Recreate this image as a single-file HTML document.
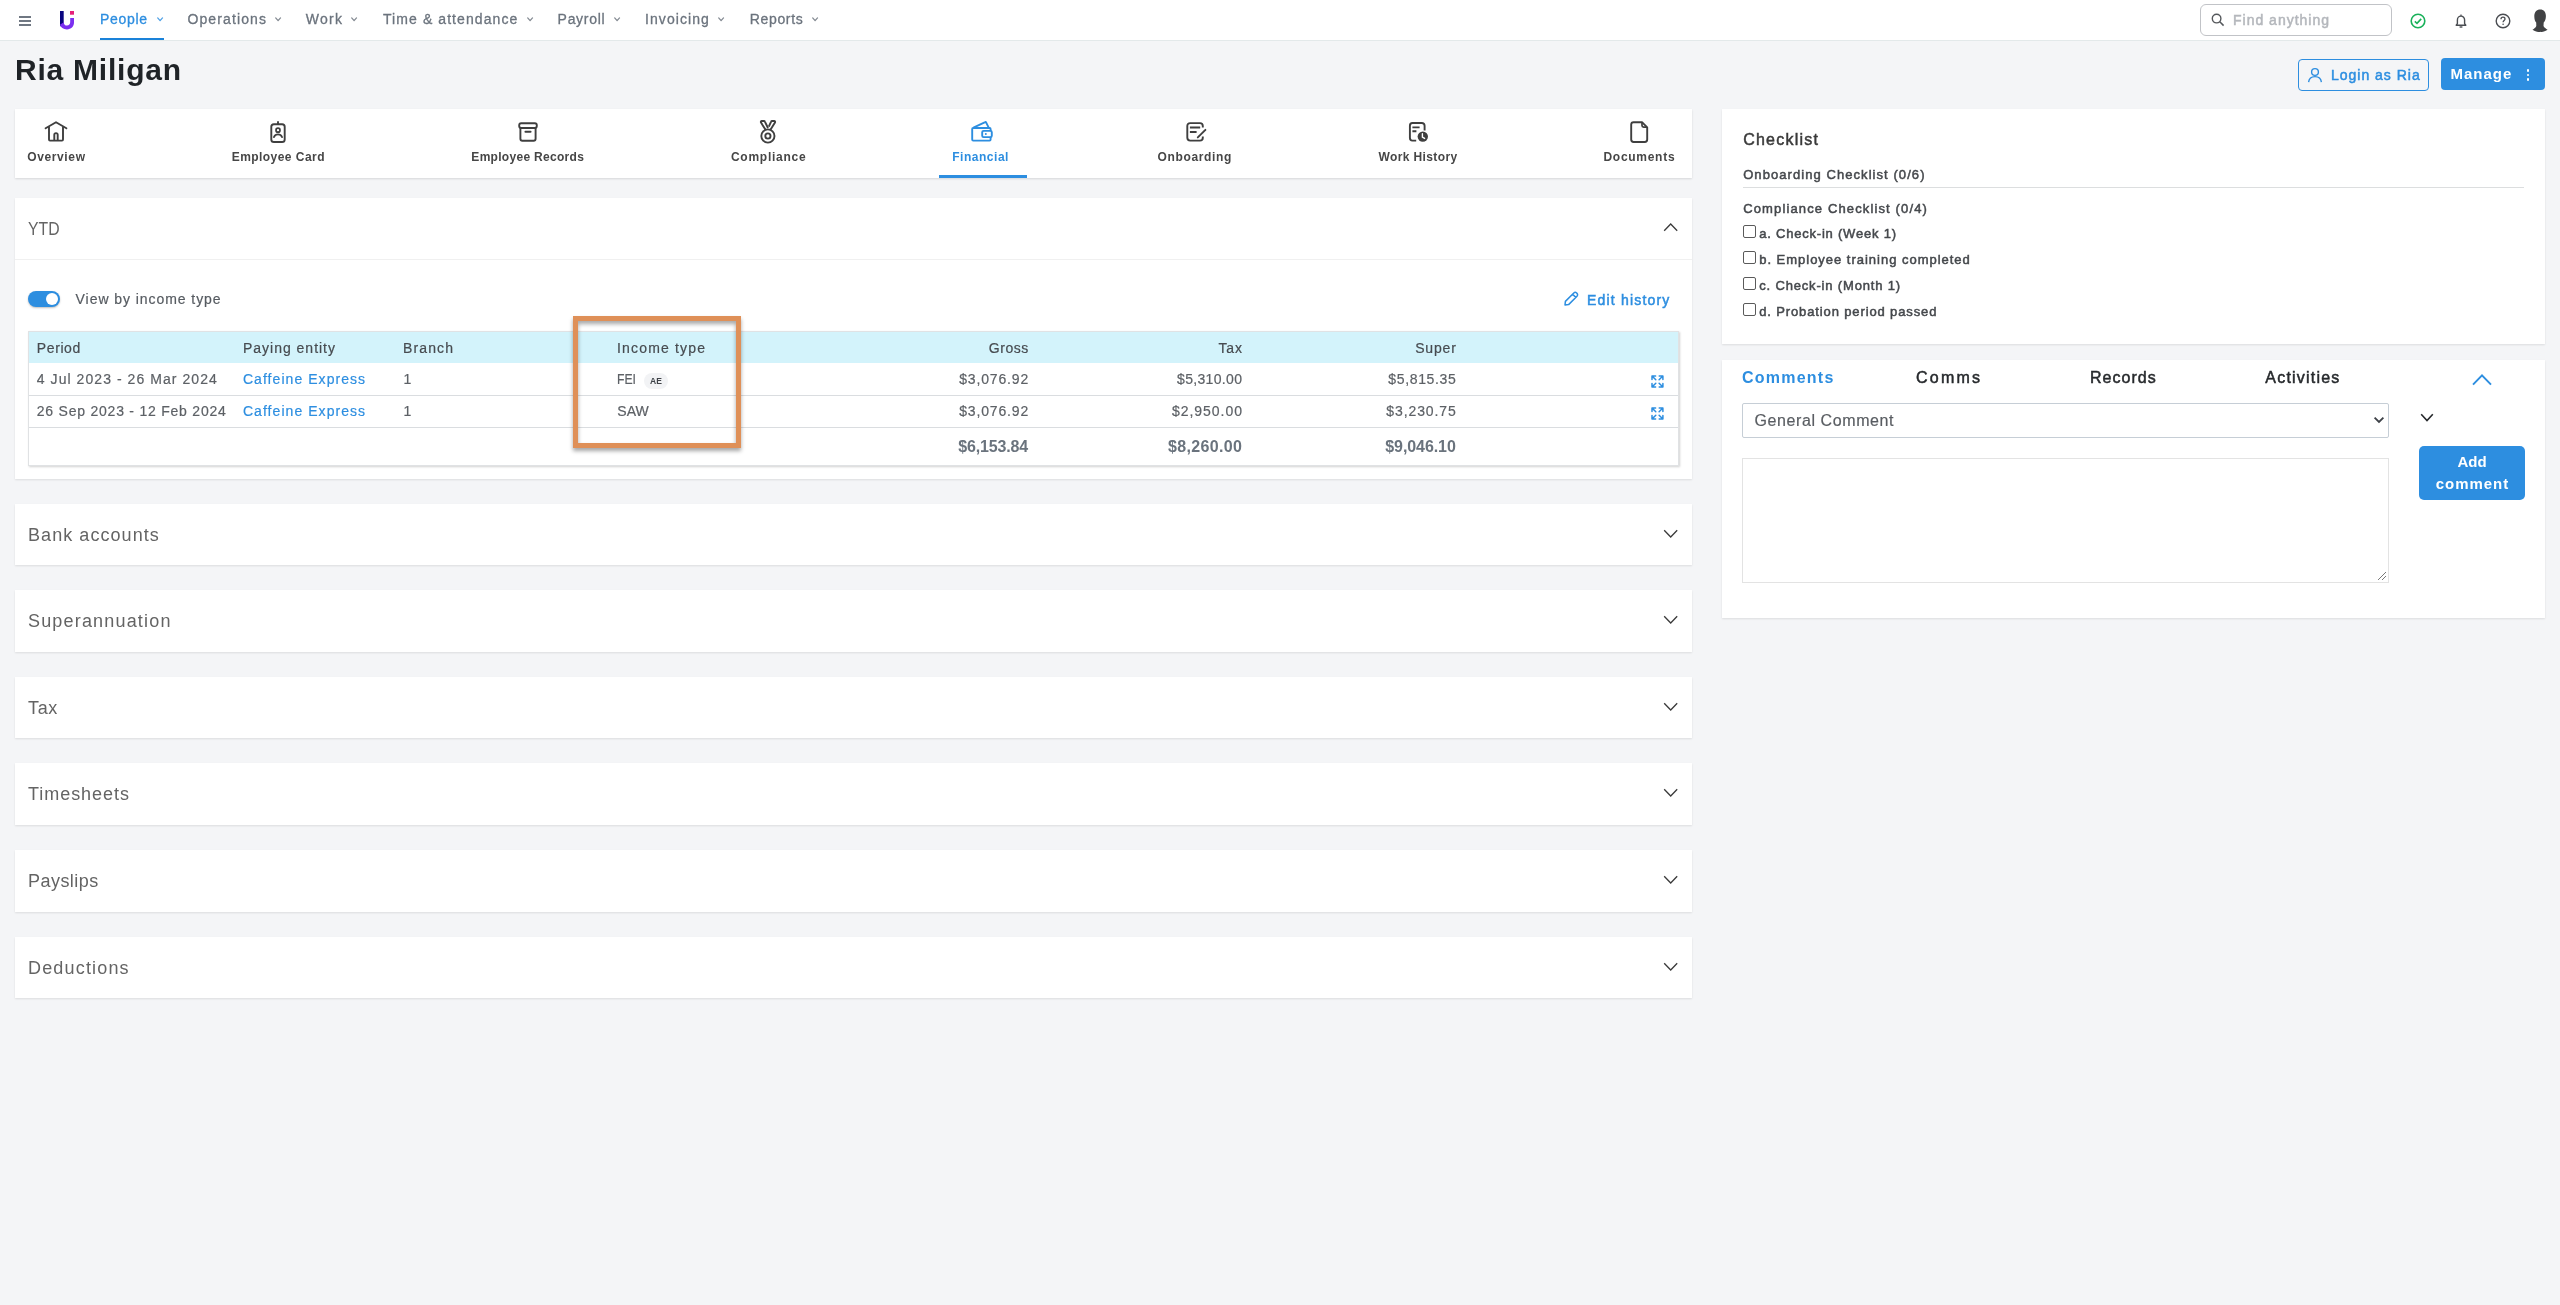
<!DOCTYPE html><html><head><meta charset="utf-8"><style>html,body{margin:0;padding:0;width:2560px;height:1305px;overflow:hidden;background:#f4f5f7;font-family:"Liberation Sans",sans-serif}.t{position:absolute;white-space:nowrap;line-height:1;-webkit-font-smoothing:antialiased}</style></head><body>
<div style="position:absolute;left:0;top:0;width:2560px;height:40px;background:#fff;border-bottom:1px solid #e3e9ea"></div>
<div style="position:absolute;left:19px;top:16.2px;width:12px;height:1.7px;background:#6f7782"></div>
<div style="position:absolute;left:19px;top:20.2px;width:12px;height:1.7px;background:#6f7782"></div>
<div style="position:absolute;left:19px;top:24.2px;width:12px;height:1.7px;background:#6f7782"></div>
<svg style="position:absolute;left:58px;top:9px" width="20" height="22" viewBox="0 0 20 22">
<rect x="12" y="2" width="4" height="3.7" fill="#e6207a"/>
<path d="M2 2 H5.7 V15 L2 17.5 Z" fill="#0a0580"/>
<path d="M2 14 V13.5 M2.2 16 C2.6 18.6 4.6 20.2 7.2 20.2 C10.2 20.2 12.3 18.2 12.3 15 V9 H16 V15 C16 19.7 12.4 23 9 23 " fill="none"/>
<path d="M2 15.8 L5.7 13.2 C5.9 15.4 7 16.6 9 16.6 C11 16.6 12.2 15.2 12.2 13 V9.1 H16 V13.6 C16 17.6 13 20.4 9 20.4 C5.3 20.4 2.6 18.3 2 15.8 Z" fill="#7b2ff0"/>
</svg>
<svg style="position:absolute;left:157.0px;top:17.4px" width="7" height="5" viewBox="0 0 7 5"><path d="M0.7 0.9 L3.1 3.7 L5.5 0.9" fill="none" stroke="#2d8ee0" stroke-width="1.2" stroke-linecap="round" stroke-linejoin="round" opacity="0.85"/></svg>
<svg style="position:absolute;left:274.8px;top:17.4px" width="7" height="5" viewBox="0 0 7 5"><path d="M0.7 0.9 L3.1 3.7 L5.5 0.9" fill="none" stroke="#6b737d" stroke-width="1.2" stroke-linecap="round" stroke-linejoin="round" opacity="0.85"/></svg>
<svg style="position:absolute;left:351.0px;top:17.4px" width="7" height="5" viewBox="0 0 7 5"><path d="M0.7 0.9 L3.1 3.7 L5.5 0.9" fill="none" stroke="#6b737d" stroke-width="1.2" stroke-linecap="round" stroke-linejoin="round" opacity="0.85"/></svg>
<svg style="position:absolute;left:526.7px;top:17.4px" width="7" height="5" viewBox="0 0 7 5"><path d="M0.7 0.9 L3.1 3.7 L5.5 0.9" fill="none" stroke="#6b737d" stroke-width="1.2" stroke-linecap="round" stroke-linejoin="round" opacity="0.85"/></svg>
<svg style="position:absolute;left:614.0px;top:17.4px" width="7" height="5" viewBox="0 0 7 5"><path d="M0.7 0.9 L3.1 3.7 L5.5 0.9" fill="none" stroke="#6b737d" stroke-width="1.2" stroke-linecap="round" stroke-linejoin="round" opacity="0.85"/></svg>
<svg style="position:absolute;left:718.0px;top:17.4px" width="7" height="5" viewBox="0 0 7 5"><path d="M0.7 0.9 L3.1 3.7 L5.5 0.9" fill="none" stroke="#6b737d" stroke-width="1.2" stroke-linecap="round" stroke-linejoin="round" opacity="0.85"/></svg>
<svg style="position:absolute;left:812.0px;top:17.4px" width="7" height="5" viewBox="0 0 7 5"><path d="M0.7 0.9 L3.1 3.7 L5.5 0.9" fill="none" stroke="#6b737d" stroke-width="1.2" stroke-linecap="round" stroke-linejoin="round" opacity="0.85"/></svg>
<div style="position:absolute;left:100px;top:38px;width:64px;height:2px;background:#1a82d9"></div>
<div style="position:absolute;left:2200px;top:4px;width:190px;height:30px;border:1px solid #c1c3c7;border-radius:6px;background:#fff"></div>
<svg style="position:absolute;left:2211px;top:13px" width="14" height="14" viewBox="0 0 14 14"><circle cx="5.6" cy="5.6" r="4.3" fill="none" stroke="#55585c" stroke-width="1.4"/><path d="M8.8 8.8 L12.6 12.6" stroke="#55585c" stroke-width="1.5"/></svg>
<svg style="position:absolute;left:2409px;top:12px" width="18" height="18" viewBox="0 0 18 18"><circle cx="9" cy="9" r="6.8" fill="none" stroke="#19b15a" stroke-width="1.6"/><path d="M5.8 9.3 L8 11.3 L12.2 6.9" fill="none" stroke="#19b15a" stroke-width="1.6"/></svg>
<svg style="position:absolute;left:2452px;top:12px" width="18" height="18" viewBox="0 0 18 18"><path d="M4.2 13.2 H13.8 L12.6 11.6 V8 C12.6 5.8 11 4.1 9 4.1 C7 4.1 5.4 5.8 5.4 8 V11.6 Z" fill="none" stroke="#4a4d52" stroke-width="1.4" stroke-linejoin="round"/><path d="M7.6 15 H10.4" stroke="#4a4d52" stroke-width="1.4"/><path d="M9 2.4 V4" stroke="#4a4d52" stroke-width="1.2"/></svg>
<svg style="position:absolute;left:2494px;top:12px" width="18" height="18" viewBox="0 0 18 18"><circle cx="9" cy="9" r="6.8" fill="none" stroke="#4a4d52" stroke-width="1.4"/><path d="M7 7.2 C7 5.9 7.9 5.2 9 5.2 C10.1 5.2 11 5.9 11 7 C11 8.4 9.1 8.6 9.1 10.2" fill="none" stroke="#4a4d52" stroke-width="1.3"/><circle cx="9.1" cy="12.3" r="0.8" fill="#4a4d52"/></svg>
<svg style="position:absolute;left:2524px;top:4px" width="32" height="32" viewBox="0 0 32 32"><path d="M16.2 5.4 C19.8 5.4 21.9 8 21.9 12 C21.9 15.4 20.9 17.4 19.7 18.4 L19.5 22 C20.3 23.6 21.9 24.8 23.6 25.7 C21.2 27.3 18.6 28 16 28 C13.4 28 10.8 27.3 8.5 25.7 C10.2 24.8 11.6 23.6 12.3 22 L12.2 18.4 C11 17.4 10.3 15.4 10.3 12 C10.3 8 12.6 5.4 16.2 5.4 Z" fill="#414244"/></svg>
<div style="position:absolute;left:2298px;top:59px;width:129px;height:30px;border:1px solid #2d8ee0;border-radius:4px"></div>
<svg style="position:absolute;left:2307px;top:67px" width="16" height="16" viewBox="0 0 16 16"><circle cx="8" cy="5" r="3.4" fill="none" stroke="#2d8ee0" stroke-width="1.4"/><path d="M1.6 15.2 C2 11.6 4.6 9.6 8 9.6 C11.4 9.6 14 11.6 14.4 15.2" fill="none" stroke="#2d8ee0" stroke-width="1.4"/></svg>
<div style="position:absolute;left:2441px;top:58px;width:104px;height:32px;background:#2d8ee0;border-radius:4px"></div>
<div style="position:absolute;left:2526.8px;top:69.2px;width:2.4px;height:2.4px;border-radius:50%;background:#fff"></div>
<div style="position:absolute;left:2526.8px;top:73.8px;width:2.4px;height:2.4px;border-radius:50%;background:#fff"></div>
<div style="position:absolute;left:2526.8px;top:78.4px;width:2.4px;height:2.4px;border-radius:50%;background:#fff"></div>
<div style="position:absolute;left:15px;top:109px;width:1677px;height:69px;background:#fff;box-shadow:0 1px 2px rgba(0,0,0,.12)"></div>
<div style="position:absolute;left:939px;top:175px;width:88px;height:3px;background:#2d8ee0"></div>
<svg style="position:absolute;left:44px;top:121px" width="24" height="22" viewBox="0 0 24 22"><path d="M1.6 7.2 L12 1.2 L22.4 7.2" fill="none" stroke="#3f3f3f" stroke-width="1.9" stroke-linecap="round" stroke-linejoin="round"/><path d="M5 5.6 V18.6 C5 19.2 5.4 19.6 6 19.6 H18 C18.6 19.6 19 19.2 19 18.6 V5.6" fill="none" stroke="#3f3f3f" stroke-width="1.9" stroke-linejoin="round"/><path d="M10.3 19.6 V13.8 C10.3 12.8 11 12.1 12 12.1 C13 12.1 13.7 12.8 13.7 13.8 V19.6" fill="none" stroke="#3f3f3f" stroke-width="1.9"/></svg>
<svg style="position:absolute;left:269px;top:120px" width="18" height="24" viewBox="0 0 18 24"><rect x="2.3" y="4.2" width="13.4" height="17.8" rx="2.6" fill="none" stroke="#3f3f3f" stroke-width="1.9"/><path d="M9 1.2 V4.2" stroke="#3f3f3f" stroke-width="1.9"/><circle cx="9" cy="10.2" r="2" fill="none" stroke="#3f3f3f" stroke-width="1.7"/><path d="M4.9 17.2 C5.7 15.3 7.1 14.4 9 14.4 C10.9 14.4 12.3 15.3 13.1 17.2" fill="none" stroke="#3f3f3f" stroke-width="1.7" stroke-linecap="round"/></svg>
<svg style="position:absolute;left:517px;top:121px" width="22" height="22" viewBox="0 0 22 22"><rect x="2.2" y="2.2" width="17.6" height="4.8" rx="2" fill="none" stroke="#3f3f3f" stroke-width="1.9"/><path d="M3.4 7 V17.8 C3.4 19 4.2 19.8 5.4 19.8 H16.6 C17.8 19.8 18.6 19 18.6 17.8 V7" fill="none" stroke="#3f3f3f" stroke-width="1.9"/><path d="M8.4 10.8 H13.6" stroke="#3f3f3f" stroke-width="1.9" stroke-linecap="round"/></svg>
<svg style="position:absolute;left:758px;top:119px" width="20" height="26" viewBox="0 0 20 26"><path d="M7.4 10.6 L3 3.6 C2.6 2.8 3 2 3.8 2 H5.8 C6.4 2 6.8 2.3 7 2.8 L10 9" fill="none" stroke="#3f3f3f" stroke-width="1.9" stroke-linejoin="round"/><path d="M12.6 10.6 L17 3.6 C17.4 2.8 17 2 16.2 2 H14.2 C13.6 2 13.2 2.3 13 2.8 L10.8 7.6" fill="none" stroke="#3f3f3f" stroke-width="1.9" stroke-linejoin="round"/><circle cx="9.9" cy="17" r="6.6" fill="#fff" stroke="#3f3f3f" stroke-width="1.9"/><circle cx="9.9" cy="17" r="2.6" fill="none" stroke="#3f3f3f" stroke-width="1.9"/></svg>
<svg style="position:absolute;left:970px;top:120px" width="24" height="23" viewBox="0 0 24 23"><path d="M3.4 7.6 L15.2 2.2 C15.6 2 16 2.2 16.2 2.6 L18.6 7.4" fill="none" stroke="#2d8ee0" stroke-width="1.9" stroke-linejoin="round"/><rect x="2.2" y="8" width="18.4" height="12.6" rx="1" fill="none" stroke="#2d8ee0" stroke-width="1.9"/><rect x="12.2" y="10.9" width="9.6" height="6.2" rx="1.4" fill="#fff" stroke="#2d8ee0" stroke-width="1.9"/><circle cx="15.8" cy="14" r="1" fill="#2d8ee0"/></svg>
<svg style="position:absolute;left:1185px;top:121px" width="22" height="22" viewBox="0 0 22 22"><path d="M17.8 6.6 V5.1 C17.8 3.4 16.9 2.1 15 2.1 H5.2 C3.4 2.1 2.3 3.2 2.3 5.1 V16.6 C2.3 18.5 3.4 19.6 5.2 19.6 H15 C16.8 19.6 17.8 18.6 17.8 16.8 V15.6" fill="none" stroke="#3f3f3f" stroke-width="1.9"/><path d="M4.9 6.5 H15.2 M4.9 11 H11.6" stroke="#3f3f3f" stroke-width="1.9"/><path d="M12.8 16.4 L20.4 8.8" stroke="#3f3f3f" stroke-width="1.9" stroke-linecap="round"/></svg>
<svg style="position:absolute;left:1408px;top:121px" width="22" height="23" viewBox="0 0 22 23"><path d="M16.6 9.4 V4.8 C16.6 3 15.6 2 13.8 2 H4.4 C2.8 2 1.9 3 1.9 4.8 V16.8 C1.9 18.6 2.8 19.6 4.4 19.6 H8.2" fill="none" stroke="#3f3f3f" stroke-width="1.9"/><path d="M4.4 6.4 H11.6 M4.4 10.2 H8.4" stroke="#3f3f3f" stroke-width="1.9"/><circle cx="14.8" cy="15.6" r="5.2" fill="#3f3f3f"/><path d="M14.4 12.8 V16 L16.6 17.4" fill="none" stroke="#fff" stroke-width="1.4" stroke-linecap="round"/></svg>
<svg style="position:absolute;left:1629px;top:120px" width="20" height="24" viewBox="0 0 20 24"><path d="M13 2.2 H4.6 C3 2.2 2.2 3 2.2 4.6 V19.6 C2.2 21.2 3 22 4.6 22 H15.8 C17.4 22 18.2 21.2 18.2 19.6 V7.4 Z" fill="none" stroke="#3f3f3f" stroke-width="1.9" stroke-linejoin="round"/><path d="M13 2.4 V5.6 C13 6.6 13.6 7.2 14.6 7.2 H18" fill="none" stroke="#3f3f3f" stroke-width="1.7"/></svg>
<div style="position:absolute;left:15px;top:198px;width:1677px;height:281px;background:#fff;box-shadow:0 1px 2px rgba(0,0,0,.1)"></div>
<svg style="position:absolute;left:1663px;top:221px" width="16" height="12" viewBox="0 0 16 12"><path d="M1.2 9.8 L7.7 3 L14.2 9.8" fill="none" stroke="#3a3a3a" stroke-width="1.3"/></svg>
<div style="position:absolute;left:15px;top:259px;width:1677px;height:1px;background:#f0f0f0"></div>
<div style="position:absolute;left:28px;top:291px;width:32px;height:16px;border-radius:8px;background:#2d8ee0;box-shadow:0 1px 2px rgba(0,0,0,.25)"></div>
<div style="position:absolute;left:46px;top:293px;width:12px;height:12px;border-radius:50%;background:#fff"></div>
<svg style="position:absolute;left:1562px;top:290px" width="18" height="18" viewBox="0 0 18 18"><path d="M3 15 L3.4 11.4 L11.8 3 C12.6 2.2 13.8 2.2 14.6 3 L15 3.4 C15.8 4.2 15.8 5.4 15 6.2 L6.6 14.6 Z M10.6 4.2 L13.8 7.4" fill="none" stroke="#2d8ee0" stroke-width="1.5" stroke-linejoin="round"/></svg>
<div style="position:absolute;left:28px;top:331px;width:1649px;height:133px;border:1px solid #e0e2e4;background:#fff;box-shadow:1px 1px 2px rgba(0,0,0,.18)"></div>
<div style="position:absolute;left:29px;top:332px;width:1649px;height:31px;background:#d3f3fb"></div>
<div style="position:absolute;left:29px;top:395px;width:1649px;height:1px;background:#dadde0"></div>
<div style="position:absolute;left:29px;top:427px;width:1649px;height:1px;background:#dadde0"></div>
<div style="position:absolute;left:644px;top:373px;width:24px;height:16px;border-radius:8px;background:#f2f3f5"></div>
<svg style="position:absolute;left:1650px;top:374px" width="15" height="15" viewBox="0 0 15 15"><g fill="none" stroke="#2d8ee0" stroke-width="1.5" stroke-linecap="round" stroke-linejoin="round"><path d="M2 5.6 V2 H5.6 M2 2 L5.8 5.8"/><path d="M9.2 2 H12.9 V5.6 M12.9 2 L9.1 5.8"/><path d="M2 9.4 V13 H5.6 M2 13 L5.8 9.2"/><path d="M12.9 9.4 V13 H9.2 M12.9 13 L9.1 9.2"/></g></svg>
<svg style="position:absolute;left:1650px;top:406px" width="15" height="15" viewBox="0 0 15 15"><g fill="none" stroke="#2d8ee0" stroke-width="1.5" stroke-linecap="round" stroke-linejoin="round"><path d="M2 5.6 V2 H5.6 M2 2 L5.8 5.8"/><path d="M9.2 2 H12.9 V5.6 M12.9 2 L9.1 5.8"/><path d="M2 9.4 V13 H5.6 M2 13 L5.8 9.2"/><path d="M12.9 9.4 V13 H9.2 M12.9 13 L9.1 9.2"/></g></svg>
<div style="position:absolute;left:15px;top:504px;width:1677px;height:61px;background:#fff;box-shadow:0 1px 2px rgba(0,0,0,.1)"></div>
<svg style="position:absolute;left:1663px;top:528px" width="16" height="12" viewBox="0 0 16 12"><path d="M1.2 2.2 L7.7 9 L14.2 2.2" fill="none" stroke="#3a3a3a" stroke-width="1.3"/></svg>
<div style="position:absolute;left:15px;top:590px;width:1677px;height:62px;background:#fff;box-shadow:0 1px 2px rgba(0,0,0,.1)"></div>
<svg style="position:absolute;left:1663px;top:614px" width="16" height="12" viewBox="0 0 16 12"><path d="M1.2 2.2 L7.7 9 L14.2 2.2" fill="none" stroke="#3a3a3a" stroke-width="1.3"/></svg>
<div style="position:absolute;left:15px;top:677px;width:1677px;height:61px;background:#fff;box-shadow:0 1px 2px rgba(0,0,0,.1)"></div>
<svg style="position:absolute;left:1663px;top:701px" width="16" height="12" viewBox="0 0 16 12"><path d="M1.2 2.2 L7.7 9 L14.2 2.2" fill="none" stroke="#3a3a3a" stroke-width="1.3"/></svg>
<div style="position:absolute;left:15px;top:763px;width:1677px;height:62px;background:#fff;box-shadow:0 1px 2px rgba(0,0,0,.1)"></div>
<svg style="position:absolute;left:1663px;top:787px" width="16" height="12" viewBox="0 0 16 12"><path d="M1.2 2.2 L7.7 9 L14.2 2.2" fill="none" stroke="#3a3a3a" stroke-width="1.3"/></svg>
<div style="position:absolute;left:15px;top:850px;width:1677px;height:62px;background:#fff;box-shadow:0 1px 2px rgba(0,0,0,.1)"></div>
<svg style="position:absolute;left:1663px;top:874px" width="16" height="12" viewBox="0 0 16 12"><path d="M1.2 2.2 L7.7 9 L14.2 2.2" fill="none" stroke="#3a3a3a" stroke-width="1.3"/></svg>
<div style="position:absolute;left:15px;top:937px;width:1677px;height:61px;background:#fff;box-shadow:0 1px 2px rgba(0,0,0,.1)"></div>
<svg style="position:absolute;left:1663px;top:961px" width="16" height="12" viewBox="0 0 16 12"><path d="M1.2 2.2 L7.7 9 L14.2 2.2" fill="none" stroke="#3a3a3a" stroke-width="1.3"/></svg>
<div style="position:absolute;left:1722px;top:109px;width:823px;height:235px;background:#fff;box-shadow:0 1px 2px rgba(0,0,0,.1)"></div>
<div style="position:absolute;left:1743px;top:187px;width:781px;height:1px;background:#dcdedf"></div>
<div style="position:absolute;left:1743px;top:225px;width:11px;height:11px;border:1px solid #5a5a5a;border-radius:2px;background:#fff"></div>
<div style="position:absolute;left:1743px;top:251px;width:11px;height:11px;border:1px solid #5a5a5a;border-radius:2px;background:#fff"></div>
<div style="position:absolute;left:1743px;top:277px;width:11px;height:11px;border:1px solid #5a5a5a;border-radius:2px;background:#fff"></div>
<div style="position:absolute;left:1743px;top:303px;width:11px;height:11px;border:1px solid #5a5a5a;border-radius:2px;background:#fff"></div>
<div style="position:absolute;left:1722px;top:360px;width:823px;height:258px;background:#fff;box-shadow:0 1px 2px rgba(0,0,0,.1)"></div>
<svg style="position:absolute;left:2471px;top:372px" width="22" height="15" viewBox="0 0 22 15"><path d="M2 12.6 L11 3.4 L20 12.6" fill="none" stroke="#2d8ee0" stroke-width="2"/></svg>
<div style="position:absolute;left:1742px;top:403px;width:645px;height:33px;border:1px solid #c6ced6;border-radius:2px;background:#fff"></div>
<svg style="position:absolute;left:2373px;top:415px" width="12" height="10" viewBox="0 0 12 10"><path d="M1.6 2.6 L6 7 L10.4 2.6" fill="none" stroke="#3d4147" stroke-width="1.8"/></svg>
<svg style="position:absolute;left:2419px;top:411px" width="16" height="13" viewBox="0 0 16 13"><path d="M2.2 3.2 L8 9.6 L13.8 3.2" fill="none" stroke="#26292c" stroke-width="1.6"/></svg>
<div style="position:absolute;left:1742px;top:458px;width:645px;height:123px;border:1px solid #e3e3e3;background:#fff"></div>
<svg style="position:absolute;left:2377px;top:571px" width="10" height="10" viewBox="0 0 10 10"><path d="M1 9 L9 1 M5 9 L9 5" stroke="#6a6a6a" stroke-width="0.9"/></svg>
<div style="position:absolute;left:2419px;top:446px;width:106px;height:54px;background:#2d8ee0;border-radius:5px"></div>
<div style="position:absolute;left:0;top:0;width:2560px;height:1305px;will-change:transform">
<span class="t" id="t0" style="top:12.15px;font-size:14px;color:#2d8ee0;font-weight:400;-webkit-text-stroke:0.3px #2d8ee0;letter-spacing:0.681px;left:100.10px;">People</span>
<span class="t" id="t1" style="top:12.15px;font-size:14px;color:#6b737d;font-weight:400;-webkit-text-stroke:0.3px #6b737d;letter-spacing:1.124px;left:187.40px;">Operations</span>
<span class="t" id="t2" style="top:12.15px;font-size:14px;color:#6b737d;font-weight:400;-webkit-text-stroke:0.3px #6b737d;letter-spacing:1.293px;left:305.70px;">Work</span>
<span class="t" id="t3" style="top:12.15px;font-size:14px;color:#6b737d;font-weight:400;-webkit-text-stroke:0.3px #6b737d;letter-spacing:1.081px;left:383.00px;">Time &amp; attendance</span>
<span class="t" id="t4" style="top:12.15px;font-size:14px;color:#6b737d;font-weight:400;-webkit-text-stroke:0.3px #6b737d;letter-spacing:0.701px;left:557.60px;">Payroll</span>
<span class="t" id="t5" style="top:12.15px;font-size:14px;color:#6b737d;font-weight:400;-webkit-text-stroke:0.3px #6b737d;letter-spacing:1.067px;left:645.00px;">Invoicing</span>
<span class="t" id="t6" style="top:12.15px;font-size:14px;color:#6b737d;font-weight:400;-webkit-text-stroke:0.3px #6b737d;letter-spacing:0.678px;left:749.70px;">Reports</span>
<span class="t" id="t7" style="top:13.15px;font-size:14px;color:#b4b7bc;font-weight:400;-webkit-text-stroke:0.5px #b4b7bc;letter-spacing:0.995px;left:2233.00px;">Find anything</span>
<span class="t" id="t8" style="top:55.40px;font-size:30px;color:#1f2327;font-weight:700;letter-spacing:0.764px;left:15.00px;">Ria Miligan</span>
<span class="t" id="t9" style="top:68.35px;font-size:14px;color:#2d8ee0;font-weight:400;-webkit-text-stroke:0.5px #2d8ee0;letter-spacing:0.988px;left:2331.00px;">Login as Ria</span>
<span class="t" id="t10" style="top:66.40px;font-size:15px;color:#fff;font-weight:700;letter-spacing:1.028px;left:2450.40px;">Manage</span>
<span class="t" id="t11" style="top:150.84px;font-size:12px;color:#464646;font-weight:700;letter-spacing:0.632px;left:56.10px;transform:translateX(-50%);padding-left:0.632px;">Overview</span>
<span class="t" id="t12" style="top:150.84px;font-size:12px;color:#464646;font-weight:700;letter-spacing:0.452px;left:278.10px;transform:translateX(-50%);padding-left:0.452px;">Employee Card</span>
<span class="t" id="t13" style="top:150.84px;font-size:12px;color:#464646;font-weight:700;letter-spacing:0.297px;left:527.60px;transform:translateX(-50%);padding-left:0.297px;">Employee Records</span>
<span class="t" id="t14" style="top:150.84px;font-size:12px;color:#464646;font-weight:700;letter-spacing:0.754px;left:768.30px;transform:translateX(-50%);padding-left:0.754px;">Compliance</span>
<span class="t" id="t15" style="top:150.84px;font-size:12px;color:#2d8ee0;font-weight:700;letter-spacing:0.536px;left:980.30px;transform:translateX(-50%);padding-left:0.536px;">Financial</span>
<span class="t" id="t16" style="top:150.84px;font-size:12px;color:#464646;font-weight:700;letter-spacing:0.656px;left:1194.40px;transform:translateX(-50%);padding-left:0.656px;">Onboarding</span>
<span class="t" id="t17" style="top:150.84px;font-size:12px;color:#464646;font-weight:700;letter-spacing:0.385px;left:1417.80px;transform:translateX(-50%);padding-left:0.385px;">Work History</span>
<span class="t" id="t18" style="top:150.84px;font-size:12px;color:#464646;font-weight:700;letter-spacing:0.720px;left:1639.00px;transform:translateX(-50%);padding-left:0.720px;">Documents</span>
<span class="t" id="t19" style="top:219.76px;font-size:18px;color:#646464;font-weight:400;transform:scaleX(0.8750);transform-origin:left center;left:28.00px;">YTD</span>
<span class="t" id="t20" style="top:292.15px;font-size:14px;color:#565b61;font-weight:400;-webkit-text-stroke:0.2px #565b61;letter-spacing:0.937px;left:75.60px;">View by income type</span>
<span class="t" id="t21" style="top:292.55px;font-size:14px;color:#2d8ee0;font-weight:400;-webkit-text-stroke:0.5px #2d8ee0;letter-spacing:1.186px;left:1587.00px;">Edit history</span>
<span class="t" id="t22" style="top:341.15px;font-size:14px;color:#474b50;font-weight:400;-webkit-text-stroke:0.2px #474b50;letter-spacing:0.606px;left:36.80px;">Period</span>
<span class="t" id="t23" style="top:341.15px;font-size:14px;color:#474b50;font-weight:400;-webkit-text-stroke:0.2px #474b50;letter-spacing:0.986px;left:243.00px;">Paying entity</span>
<span class="t" id="t24" style="top:341.15px;font-size:14px;color:#474b50;font-weight:400;-webkit-text-stroke:0.2px #474b50;letter-spacing:1.128px;left:403.00px;">Branch</span>
<span class="t" id="t25" style="top:341.15px;font-size:14px;color:#474b50;font-weight:400;-webkit-text-stroke:0.2px #474b50;letter-spacing:1.173px;left:617.00px;">Income type</span>
<span class="t" id="t26" style="top:341.15px;font-size:14px;color:#474b50;font-weight:400;-webkit-text-stroke:0.2px #474b50;letter-spacing:0.514px;right:1531.29px;">Gross</span>
<span class="t" id="t27" style="top:341.15px;font-size:14px;color:#474b50;font-weight:400;-webkit-text-stroke:0.2px #474b50;letter-spacing:0.852px;right:1317.15px;">Tax</span>
<span class="t" id="t28" style="top:341.15px;font-size:14px;color:#474b50;font-weight:400;-webkit-text-stroke:0.2px #474b50;letter-spacing:0.810px;right:1103.39px;">Super</span>
<span class="t" id="t29" style="top:372.15px;font-size:14px;color:#5d6166;font-weight:400;-webkit-text-stroke:0.2px #5d6166;letter-spacing:1.058px;left:36.80px;">4 Jul 2023 - 26 Mar 2024</span>
<span class="t" id="t30" style="top:403.75px;font-size:14px;color:#5d6166;font-weight:400;-webkit-text-stroke:0.2px #5d6166;letter-spacing:0.772px;left:36.80px;">26 Sep 2023 - 12 Feb 2024</span>
<span class="t" id="t31" style="top:372.15px;font-size:14px;color:#2d8ee0;font-weight:400;-webkit-text-stroke:0.2px #2d8ee0;letter-spacing:1.056px;left:242.90px;">Caffeine Express</span>
<span class="t" id="t32" style="top:403.75px;font-size:14px;color:#2d8ee0;font-weight:400;-webkit-text-stroke:0.2px #2d8ee0;letter-spacing:1.056px;left:242.90px;">Caffeine Express</span>
<span class="t" id="t33" style="top:372.15px;font-size:14px;color:#5d6166;font-weight:400;-webkit-text-stroke:0.2px #5d6166;left:403.50px;">1</span>
<span class="t" id="t34" style="top:403.75px;font-size:14px;color:#5d6166;font-weight:400;-webkit-text-stroke:0.2px #5d6166;left:403.50px;">1</span>
<span class="t" id="t35" style="top:372.15px;font-size:14px;color:#5d6166;font-weight:400;-webkit-text-stroke:0.2px #5d6166;transform:scaleX(0.8723);transform-origin:left center;left:617.20px;">FEI</span>
<span class="t" id="t36" style="top:403.75px;font-size:14px;color:#5d6166;font-weight:400;-webkit-text-stroke:0.2px #5d6166;letter-spacing:0.113px;left:617.20px;">SAW</span>
<span class="t" id="t37" style="top:377.00px;font-size:8.5px;color:#3f4348;font-weight:700;letter-spacing:0.188px;left:650.00px;">AE</span>
<span class="t" id="t38" style="top:372.15px;font-size:14px;color:#5d6166;font-weight:400;-webkit-text-stroke:0.2px #5d6166;letter-spacing:0.838px;right:1530.96px;">$3,076.92</span>
<span class="t" id="t39" style="top:372.15px;font-size:14px;color:#5d6166;font-weight:400;-webkit-text-stroke:0.2px #5d6166;letter-spacing:0.338px;right:1317.66px;">$5,310.00</span>
<span class="t" id="t40" style="top:372.15px;font-size:14px;color:#5d6166;font-weight:400;-webkit-text-stroke:0.2px #5d6166;letter-spacing:0.650px;right:1103.55px;">$5,815.35</span>
<span class="t" id="t41" style="top:403.75px;font-size:14px;color:#5d6166;font-weight:400;-webkit-text-stroke:0.2px #5d6166;letter-spacing:0.838px;right:1530.96px;">$3,076.92</span>
<span class="t" id="t42" style="top:403.75px;font-size:14px;color:#5d6166;font-weight:400;-webkit-text-stroke:0.2px #5d6166;letter-spacing:0.963px;right:1317.04px;">$2,950.00</span>
<span class="t" id="t43" style="top:403.75px;font-size:14px;color:#5d6166;font-weight:400;-webkit-text-stroke:0.2px #5d6166;letter-spacing:0.900px;right:1103.30px;">$3,230.75</span>
<span class="t" id="t44" style="top:438.86px;font-size:16px;color:#6a737d;font-weight:700;letter-spacing:-0.148px;right:1531.95px;">$6,153.84</span>
<span class="t" id="t45" style="top:438.86px;font-size:16px;color:#6a737d;font-weight:700;letter-spacing:0.352px;right:1317.65px;">$8,260.00</span>
<span class="t" id="t46" style="top:438.86px;font-size:16px;color:#6a737d;font-weight:700;letter-spacing:-0.086px;right:1104.29px;">$9,046.10</span>
<span class="t" id="t47" style="top:525.56px;font-size:18px;color:#646464;font-weight:400;letter-spacing:1.060px;left:28.00px;">Bank accounts</span>
<span class="t" id="t48" style="top:611.56px;font-size:18px;color:#646464;font-weight:400;letter-spacing:1.176px;left:28.00px;">Superannuation</span>
<span class="t" id="t49" style="top:698.56px;font-size:18px;color:#646464;font-weight:400;letter-spacing:0.642px;left:28.00px;">Tax</span>
<span class="t" id="t50" style="top:784.56px;font-size:18px;color:#646464;font-weight:400;letter-spacing:0.958px;left:28.00px;">Timesheets</span>
<span class="t" id="t51" style="top:871.56px;font-size:18px;color:#646464;font-weight:400;letter-spacing:0.453px;left:28.00px;">Payslips</span>
<span class="t" id="t52" style="top:958.56px;font-size:18px;color:#646464;font-weight:400;letter-spacing:1.171px;left:28.00px;">Deductions</span>
<span class="t" id="t53" style="top:131.86px;font-size:16px;color:#3a3a3a;font-weight:400;-webkit-text-stroke:0.5px #3a3a3a;letter-spacing:1.237px;left:1743.20px;">Checklist</span>
<span class="t" id="t54" style="top:168.30px;font-size:13px;color:#45484c;font-weight:400;-webkit-text-stroke:0.5px #45484c;letter-spacing:1.066px;left:1743.20px;">Onboarding Checklist (0/6)</span>
<span class="t" id="t55" style="top:201.60px;font-size:13px;color:#45484c;font-weight:400;-webkit-text-stroke:0.5px #45484c;letter-spacing:1.134px;left:1743.20px;">Compliance Checklist (0/4)</span>
<span class="t" id="t56" style="top:226.90px;font-size:13px;color:#45484c;font-weight:400;-webkit-text-stroke:0.5px #45484c;letter-spacing:0.786px;left:1759.20px;">a. Check-in (Week 1)</span>
<span class="t" id="t57" style="top:252.90px;font-size:13px;color:#45484c;font-weight:400;-webkit-text-stroke:0.5px #45484c;letter-spacing:0.982px;left:1759.20px;">b. Employee training completed</span>
<span class="t" id="t58" style="top:278.90px;font-size:13px;color:#45484c;font-weight:400;-webkit-text-stroke:0.5px #45484c;letter-spacing:0.837px;left:1759.20px;">c. Check-in (Month 1)</span>
<span class="t" id="t59" style="top:304.90px;font-size:13px;color:#45484c;font-weight:400;-webkit-text-stroke:0.5px #45484c;letter-spacing:0.872px;left:1759.20px;">d. Probation period passed</span>
<span class="t" id="t60" style="top:369.66px;font-size:16px;color:#2d8ee0;font-weight:700;letter-spacing:1.230px;left:1742.00px;">Comments</span>
<span class="t" id="t61" style="top:369.66px;font-size:16px;color:#26292c;font-weight:400;-webkit-text-stroke:0.5px #26292c;letter-spacing:2.223px;left:1916.00px;">Comms</span>
<span class="t" id="t62" style="top:369.66px;font-size:16px;color:#26292c;font-weight:400;-webkit-text-stroke:0.5px #26292c;letter-spacing:1.020px;left:2090.00px;">Records</span>
<span class="t" id="t63" style="top:369.66px;font-size:16px;color:#26292c;font-weight:400;-webkit-text-stroke:0.5px #26292c;letter-spacing:1.208px;left:2265.30px;">Activities</span>
<span class="t" id="t64" style="top:413.16px;font-size:16px;color:#595d62;font-weight:400;-webkit-text-stroke:0.2px #595d62;letter-spacing:0.592px;left:1754.50px;">General Comment</span>
<span class="t" id="t65" style="top:454.30px;font-size:15px;color:#fff;font-weight:700;letter-spacing:0.014px;left:2472.00px;transform:translateX(-50%);padding-left:0.014px;">Add</span>
<span class="t" id="t66" style="top:475.90px;font-size:15px;color:#fff;font-weight:700;letter-spacing:0.952px;left:2472.00px;transform:translateX(-50%);padding-left:0.952px;">comment</span>
</div>
<div style="position:absolute;left:573px;top:316px;width:158px;height:122px;border:5px solid #df9058;box-shadow:0 3px 4px rgba(0,0,0,.35), inset 0 3px 4px rgba(0,0,0,.35)"></div>
</body></html>
